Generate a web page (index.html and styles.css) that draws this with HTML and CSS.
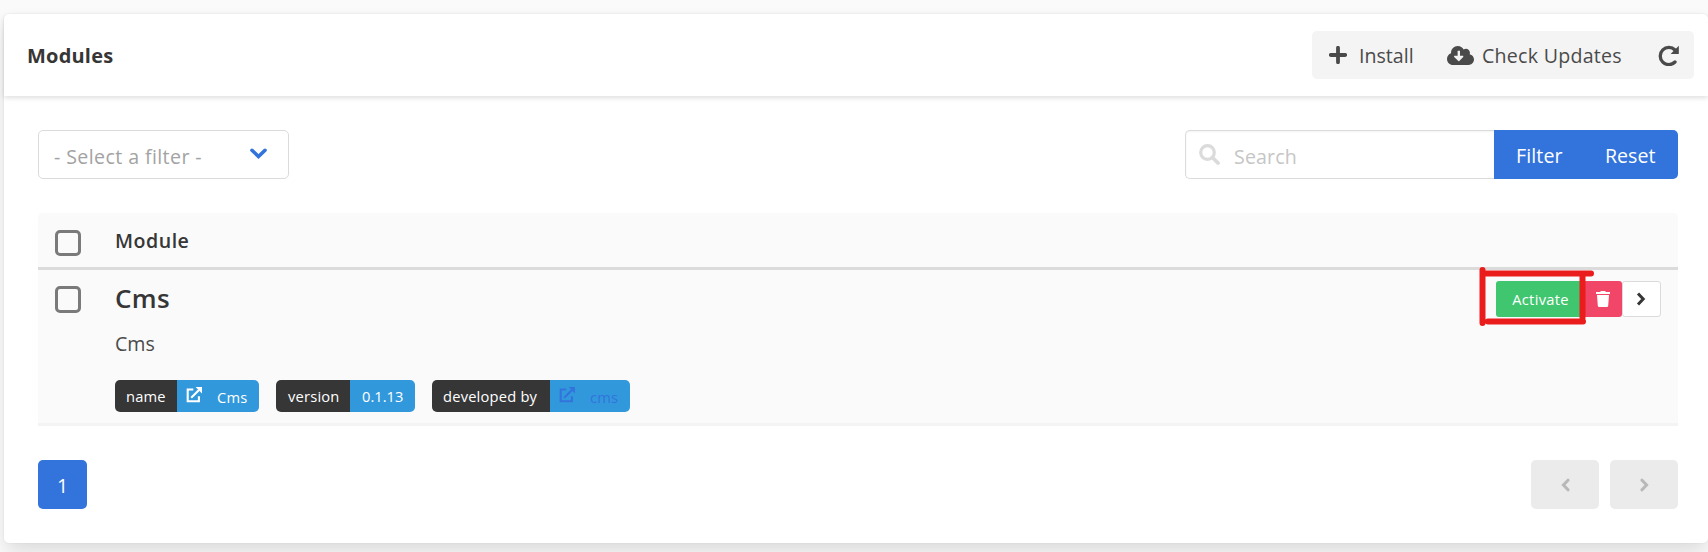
FILE: index.html
```html
<!DOCTYPE html>
<html lang="en">
<head>
<meta charset="utf-8">
<title>Modules</title>
<link rel="stylesheet" href="styles.css">
</head>
<body>
<svg class="defs" width="0" height="0">
  <symbol id="chev" viewBox="0 0 10 16"><path d="M2 2.500 7.200 8 2 13.500" fill="none" stroke="currentColor" stroke-width="3"/></symbol>
  <symbol id="ext" viewBox="0 0 16 16"><path d="M7.300 2.500H1.700v11.800h11.200V9.300M5.200 10.800 13 3" fill="none" stroke="currentColor" stroke-width="2.100"/><path d="M9.600 0H16v6.400z" fill="currentColor"/></symbol>
</svg>
<main class="card">
  <header class="card-header">
    <h1 class="title"><span class="t-modules">Modules</span></h1>
    <div class="toolbar">
      <button class="tool install"><svg width="18" height="18" viewBox="0 0 18 18"><path d="M9 1.800v14.400M1.800 9h14.400" stroke="currentColor" stroke-width="3.800" stroke-linecap="round"/></svg><span>Install</span></button>
      <button class="tool updates"><svg width="27" height="19" viewBox="0 0 640 448"><path fill="currentColor" d="M537.600 194.600c4.100-10.700 6.400-22.400 6.400-34.600 0-53-43-96-96-96-19.700 0-38.100 6-53.300 16.200C367 32.200 315.300 0 256 0c-88.400 0-160 71.600-160 160 0 2.700.1 5.400.2 8.100C40.200 187.800 0 241.200 0 304c0 79.500 64.500 144 144 144h368c70.700 0 128-57.300 128-128 0-61.900-44-113.600-102.400-125.400z"/><path fill="#f4f4f4" d="M252 112h56v120h64c15 0 20 15 11 25L292 356c-6 6-17 6-23 0l-98-99c-9-10-3-25 11-25h70z"/></svg><span class="t-updates">Check Updates</span></button>
      <button class="tool refresh"><svg width="21" height="21" viewBox="0 0 21 21"><path d="M17 17A8.600 8.600 0 1 1 17 5" fill="none" stroke="currentColor" stroke-width="3.300" stroke-linecap="round"/><path d="M20.800 .8v8.200h-8.200z" fill="currentColor"/></svg></button>
    </div>
  </header>
  <section class="content">
    <div class="filters">
      <div class="select"><span class="t-select">- Select a filter -</span><svg width="17" height="12" viewBox="0 0 17 12"><path d="M2 2.300 8.500 8.500l6.500-6.200" fill="none" stroke="currentColor" stroke-width="3.600" stroke-linecap="round"/></svg></div>
      <div class="search">
        <div class="field"><svg width="21" height="21" viewBox="0 0 21 21" fill="none" stroke="currentColor"><circle cx="8.500" cy="8.500" r="6.800" stroke-width="3.200"/><path d="M13.500 13.500 19 19" stroke-width="3.800" stroke-linecap="round"/></svg><span class="t-search">Search</span></div>
        <button class="btn filter"><span>Filter</span></button><button class="btn reset"><span>Reset</span></button>
      </div>
    </div>
    <div class="table">
      <div class="row head"><i class="check"></i><span class="t-module">Module</span></div>
      <div class="row item">
        <i class="check"></i>
        <div class="info">
          <h2 class="name"><span class="t-name">Cms</span></h2>
          <p class="desc"><span class="t-desc">Cms</span></p>
          <div class="tags">
            <div class="tag"><span class="key k1"><span class="t-key">name</span></span><span class="val v1"><svg class="ext" width="16" height="16"><use href="#ext"/></svg><span class="t-val">Cms</span></span></div>
            <div class="tag"><span class="key k2"><span class="t-version">version</span></span><span class="val v2"><span class="t-num">0.1.13</span></span></div>
            <div class="tag"><span class="key k3"><span class="t-dev">developed by</span></span><span class="val v3"><svg class="ext" width="16" height="16"><use href="#ext"/></svg><span class="t-val">cms</span></span></div>
          </div>
        </div>
        <div class="actions">
          <button class="act activate"><span class="t-act">Activate</span></button>
          <button class="act trash"><svg width="14" height="16" viewBox="0 0 14 16" fill="currentColor"><path d="M0 1h4.200L4.800 0h4.400l.6 1H14v2H0zM1 4h12l-.8 10.700A1.400 1.400 0 0 1 10.800 16H3.200a1.400 1.400 0 0 1-1.400-1.300z"/></svg></button>
          <button class="act more"><svg width="10" height="16"><use href="#chev"/></svg></button>
          <svg class="mark" width="117" height="61" viewBox="0 0 117 61" fill="none" stroke="#ea1c1c" stroke-linecap="round"><path d="M3.500 3v53M4 6.500h108M9 54.500h95" stroke-width="6"/><path d="M103.500 7v44" stroke-width="6"/></svg>
        </div>
      </div>
    </div>
    <nav class="pager">
      <span class="page"><span>1</span></span>
      <div class="steps"><span class="step prev"><svg width="9" height="14" viewBox="0 0 9 14"><path d="M7 2.200 2.400 7 7 11.800" fill="none" stroke="currentColor" stroke-width="3" stroke-linecap="round"/></svg></span><span class="step"><svg width="9" height="14" viewBox="0 0 9 14"><path d="M2 2.200 6.600 7 2 11.800" fill="none" stroke="currentColor" stroke-width="3" stroke-linecap="round"/></svg></span></div>
    </nav>
  </section>
</main>
</body>
</html>
```
FILE: styles.css
```css
* { box-sizing: border-box; }
body { margin: 0; padding: 14px 0 0 4px; height: 552px; overflow: hidden; background: #fafafa; color: #4a4a4a; font: 19.6px/29px "Open Sans", "Noto Sans", sans-serif; }
button { border: 0; padding: 0; font: inherit; color: inherit; background: none; }
svg { display: block; flex: none; }
.defs { position: absolute; }
.card { width: 1704px; height: 529px; background: #fff; border-radius: 5px; box-shadow: 0 10px 20px -2px rgba(10,10,10,.13), 0 0 0 1px rgba(10,10,10,.02); }
.card-header { height: 82px; display: flex; align-items: center; justify-content: space-between; padding: 0 14px 0 23px; box-shadow: 0 2px 5px rgba(10,10,10,.13); border-radius: 5px 5px 0 0; }
.title { margin: 0; font-size: 20px; letter-spacing: .2px; font-weight: 700; color: #363636; }
.toolbar { display: flex; align-items: center; width: 382px; height: 48px; background: #f4f4f4; border-radius: 5px; padding-left: 17px; }
.tool { display: flex; align-items: center; }
.install { width: 118px; gap: 12px; }
.updates { width: 211px; gap: 8px; }
.t-updates { letter-spacing: .25px; }
.content { padding: 34px 30px 0 34px; }
.filters { display: flex; justify-content: space-between; }
.select { width: 251px; height: 49px; border: 1px solid #dbdbdb; border-radius: 5px; display: flex; align-items: center; justify-content: space-between; padding: 4px 21px 0 15px; color: #a3a3a3; }
.t-select { letter-spacing: .4px; }
.select svg { color: #3273dc; margin-top: -5px; }
.search { display: flex; width: 493px; height: 49px; }
.field { width: 309px; border: 1px solid #dbdbdb; border-right: 0; border-radius: 5px 0 0 5px; box-shadow: inset 0 1px 2px rgba(10,10,10,.05); display: flex; align-items: center; gap: 14px; padding: 4px 0 0 13px; color: #c6c6c6; }
.t-search { letter-spacing: .15px; }
.field svg { color: #dbdbdb; margin-top: -5px; }
.btn { background: #3273dc; color: #fff; height: 49px; text-align: left; padding-top: 1px; }
.filter { width: 89px; padding-left: 22px; letter-spacing: .1px; }
.reset { width: 95px; padding-left: 22px; border-radius: 0 5px 5px 0; }
.table { margin-top: 34px; background: #fafafa; border-radius: 5px 5px 0 0; height: 213px; border-bottom: 3px solid #f4f4f4; }
.row { display: flex; padding-left: 17px; }
.head { height: 57px; border-bottom: 3px solid #dbdbdb; color: #363636; font-weight: 600; padding-top: 17px; }
.head > span { margin-top: -4px; letter-spacing: .5px; }
.item { padding-top: 16px; }
.check { width: 26px; height: 26px; border: 3px solid #7a7a7a; border-radius: 5px; margin-right: 34px; flex: none; }
.item .check { height: 27px; }
.info { flex: 1; }
.name { margin: -4px 0 0; font-size: 26px; letter-spacing: .3px; line-height: 32px; color: #363636; font-weight: 600; }
.desc { margin: 15px 0 0; }
.tags { display: flex; gap: 17px; margin-top: 22px; font-size: 14.7px; color: #fff; }
.tag { display: flex; height: 32px; border-radius: 5px; overflow: hidden; line-height: 32px; white-space: nowrap; }
.key { background: #363636; padding-left: 11px; letter-spacing: .2px; }
.val { background: #3298dc; display: flex; }
.ext { margin: 7px 15px 0 9px; }
.t-val { padding-top: 1px; letter-spacing: .2px; }
.k1 { width: 62px; } .v1 { width: 82px; }
.k2 { width: 74px; padding-left: 12px; } .v2 { width: 65px; padding-left: 12px; }
.k3 { width: 118px; } .v3 { width: 80px; color: #3273dc; }
.actions { position: relative; display: flex; margin: -5px 17px 0 0; height: 36px; font-size: 14.7px; }
.act { height: 36px; border-radius: 3px; display: flex; align-items: center; justify-content: center; color: #fff; }
.activate { width: 87px; background: #40c66f; border-radius: 3px 0 0 3px; padding-left: 2px; letter-spacing: .3px; }
.trash { width: 39px; background: #f14668; border-radius: 0 3px 3px 0; }
.trash svg { margin-left: 0; }
.more { width: 39px; background: #fff; border: 1px solid #dbdbdb; color: #363636; }
.more svg { margin-left: -1px; }
.mark { position: absolute; left: -17px; top: -14px; }
.pager { display: flex; justify-content: space-between; margin-top: 34px; }
.page { width: 49px; height: 49px; border-radius: 5px; background: #3273dc; color: #fff; text-align: center; line-height: 51px; }
.steps { display: flex; gap: 11px; }
.step { width: 68px; height: 49px; border-radius: 5px; background: #ebebeb; color: #b8b8b8; display: flex; align-items: center; justify-content: center; }
```
